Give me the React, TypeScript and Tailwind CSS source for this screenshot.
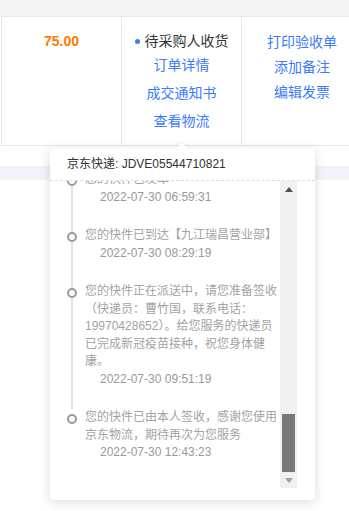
import React from "react";

const FONT = "font-['Liberation_Sans','Noto_Sans_CJK_SC',sans-serif]";

type Track = { text: string; time: string };

// 物流轨迹（列表已滚动到底部）
const TRACKS: Track[] = [
  { text: "您的快件已发车", time: "2022-07-30 06:59:31" },
  { text: "您的快件已到达【九江瑞昌营业部】", time: "2022-07-30 08:29:19" },
  {
    text: "您的快件正在派送中，请您准备签收（快递员：曹竹国，联系电话：19970428652）。给您服务的快递员已完成新冠疫苗接种，祝您身体健康。",
    time: "2022-07-30 09:51:19",
  },
  { text: "您的快件已由本人签收，感谢您使用京东物流，期待再次为您服务", time: "2022-07-30 12:43:23" },
];

function Caret({ down, color }: { down?: boolean; color: string }) {
  return (
    <svg width="8" height="5" viewBox="0 0 8 5">
      <polygon points={down ? "0,0 8,0 4,5" : "0,5 8,5 4,0"} fill={color} />
    </svg>
  );
}

function TimelineItem({ item, last }: { item: Track; last: boolean }) {
  return (
    <div
      className={`relative ml-[21px] border-l-2 pl-[12px] pb-[21px] ${
        last ? "border-transparent" : "border-[#e3e3e3]"
      }`}
    >
      <span className="absolute -left-[6px] top-[5px] h-[10px] w-[10px] rounded-full border-2 border-[#999] bg-white" />
      <p className="text-[12px] leading-[17.5px] text-[#a3a3a3]">{item.text}</p>
      <p className="pl-[15px] text-[12px] leading-[17.5px] text-[#999]">{item.time}</p>
    </div>
  );
}

function LogisticsPopover() {
  return (
    <div className="absolute left-[50px] top-[148px] w-[265px] h-[352px] rounded-[4px] bg-white shadow-[0_2px_12px_rgba(0,0,0,0.14)]">
      {/* 小三角 */}
      <span className="absolute left-[128px] -top-[4px] h-[8px] w-[8px] rotate-45 bg-white shadow-[-1px_-1px_2px_rgba(0,0,0,0.06)]" />

      <div className="relative flex h-[33px] items-center border-b border-dashed border-[#dcdcdc] px-[17px] text-[12px] text-[#333]">
        京东快递: JDVE05544710821
      </div>

      <div className="flex h-[307px]">
        <div className="flex-1 overflow-hidden">
          <div className="-mt-[10px]">
            {TRACKS.map((t, i) => (
              <TimelineItem key={t.time} item={t} last={i === TRACKS.length - 1} />
            ))}
          </div>
        </div>

        {/* 滚动条 */}
        <div className="mr-[18px] flex w-[17px] flex-col bg-[#f1f1f1]">
          <div className="flex h-[17px] items-center justify-center">
            <Caret color="#505050" />
          </div>
          <div className="flex flex-1 flex-col justify-end">
            <div className="mx-[2px] h-[58px] bg-[#787878]" />
          </div>
          <div className="flex h-[16px] items-center justify-center">
            <Caret down color="#a3a3a3" />
          </div>
        </div>
      </div>
    </div>
  );
}

export default function App() {
  return (
    <div className={`relative h-[511px] w-[349px] overflow-hidden bg-white ${FONT}`}>
      <div className="h-[16px] bg-[#f5f5f5]" />

      <div className="ml-px flex h-[130px] border-y border-l border-[#e8e8e8]">
        <div className="w-[120px] shrink-0 border-r border-[#e8e8e8] pt-[14px] text-center text-[14px] font-bold leading-[20px] text-[#ff7a00]">
          75.00
        </div>

        <div className="flex w-[120px] shrink-0 flex-col items-center border-r border-[#e8e8e8] pt-[14px] text-[14px] leading-[20px]">
          <div className="flex items-center gap-[5px] text-[#333]">
            <span className="h-[5px] w-[5px] rounded-full bg-[#3a7afe]" />
            待采购人收货
          </div>
          <div className="mt-[4px] flex flex-col items-center gap-[8px] text-[#3a7afe]">
            <span>订单详情</span>
            <span>成交通知书</span>
            <span>查看物流</span>
          </div>
        </div>

        <div className="flex w-[120px] shrink-0 flex-col items-center gap-[5px] pt-[15px] text-[14px] leading-[20px] text-[#3a7afe]">
          <span>打印验收单</span>
          <span>添加备注</span>
          <span>编辑发票</span>
        </div>
      </div>

      <div className="mt-[20px] h-[14px] bg-[#f3f4fa]" />

      <LogisticsPopover />
    </div>
  );
}
